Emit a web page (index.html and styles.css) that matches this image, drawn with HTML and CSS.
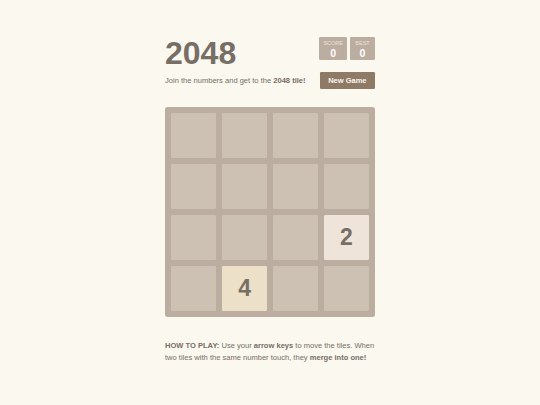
FILE: index.html
```html
<!DOCTYPE html>
<html>
<head>
<meta charset="utf-8">
<link rel="stylesheet" href="styles.css">
</head>
<body>
<div class="container">
  <div class="heading">
    <h1 class="title">2048</h1>
    <div class="scores">
      <div class="score-box"><div class="label">SCORE</div><div class="value">0</div></div>
      <div class="score-box"><div class="label">BEST</div><div class="value">0</div></div>
    </div>
  </div>
  <div class="above-game">
    <p class="intro">Join the numbers and get to the <strong>2048 tile!</strong></p>
    <a class="new-game">New Game</a>
  </div>
  <div class="grid">
    <div class="cell"></div><div class="cell"></div><div class="cell"></div><div class="cell"></div>
    <div class="cell"></div><div class="cell"></div><div class="cell"></div><div class="cell"></div>
    <div class="cell"></div><div class="cell"></div><div class="cell"></div><div class="cell tile-2">2</div>
    <div class="cell"></div><div class="cell tile-4">4</div><div class="cell"></div><div class="cell"></div>
  </div>
  <p class="explanation"><strong>HOW TO PLAY:</strong> Use your <strong>arrow keys</strong> to move the tiles. When two tiles with the same number touch, they <strong>merge into one!</strong></p>
</div>
</body>
</html>
```
FILE: styles.css
```css
html, body {
  margin: 0;
  padding: 0;
  background: #faf8ef;
  color: #776e65;
  font-family: "Liberation Sans", Arial, sans-serif;
}
.container {
  width: 210px;
  margin: 0 auto;
  padding-top: 37px;
}
.heading {
  display: flex;
  justify-content: space-between;
  align-items: flex-start;
}
.title {
  margin: 0;
  font-size: 32px;
  line-height: 32px;
  font-weight: bold;
}
.scores {
  display: flex;
  gap: 3px;
}
.score-box {
  background: #bbada0;
  min-width: 25px;
  box-sizing: border-box;
  padding: 3px 4px 1px;
  border-radius: 1.3px;
  text-align: center;
}
.label {
  font-size: 5.5px;
  line-height: 7px;
  color: #eee4da;
}
.value {
  font-size: 10.5px;
  line-height: 12px;
  font-weight: bold;
  color: #ffffff;
}
.above-game {
  display: flex;
  justify-content: space-between;
  align-items: center;
  margin-top: 3px;
}
.intro {
  margin: 0;
  font-size: 7.56px;
  line-height: 17px;
}
.new-game {
  display: block;
  background: #8f7a66;
  color: #f9f6f2;
  font-weight: bold;
  font-size: 7.5px;
  line-height: 17px;
  height: 17px;
  padding: 0 8.5px;
  border-radius: 1.3px;
}
.grid {
  margin-top: 18px;
  background: #bbada0;
  border-radius: 2.5px;
  padding: 6.3px;
  display: grid;
  grid-template-columns: repeat(4, 1fr);
  grid-auto-rows: 44.6px;
  gap: 6.3px;
  box-sizing: border-box;
  width: 210px;
}
.cell {
  background: #cdc1b4;
  border-radius: 1.3px;
  display: flex;
  align-items: center;
  justify-content: center;
  font-size: 23px;
  font-weight: bold;
  color: #776e65;
}
.tile-2 { background: #eee4da; }
.tile-4 { background: #ede0c8; }
.explanation {
  margin: 23px 0 0;
  font-size: 7.56px;
  line-height: 12.5px;
}
```
